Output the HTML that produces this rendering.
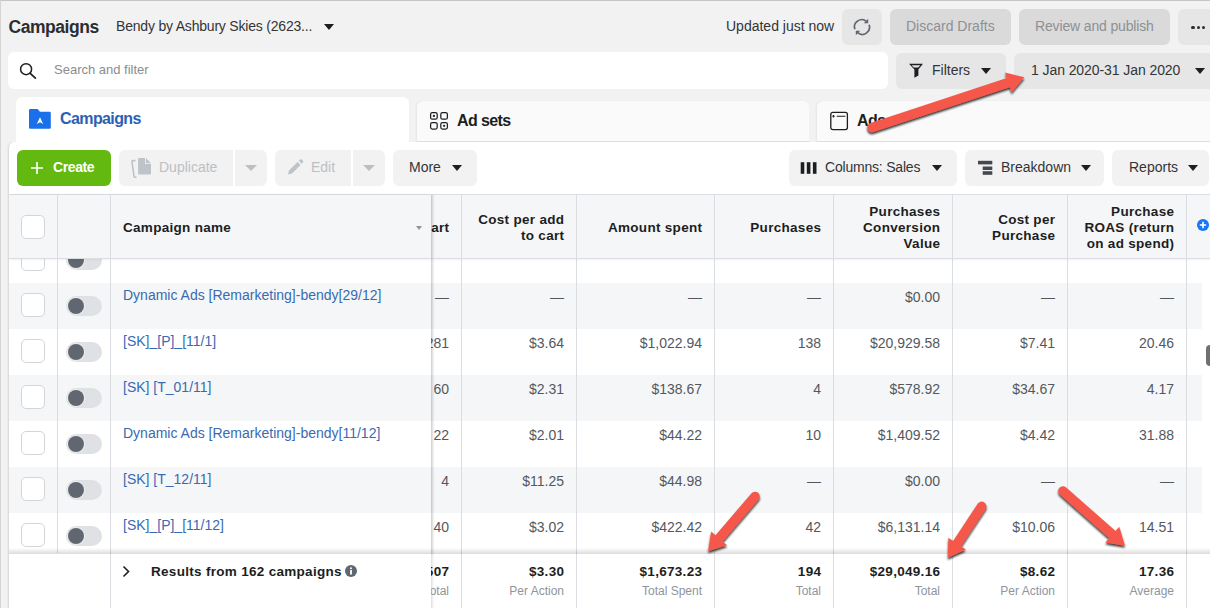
<!DOCTYPE html>
<html><head><meta charset="utf-8">
<style>
*{box-sizing:border-box;margin:0;padding:0}
html,body{width:1210px;height:608px;overflow:hidden}
body{position:relative;background:#f2f2f2;font-family:"Liberation Sans",sans-serif;color:#1c1e21;font-size:14px}
.a{position:absolute}
.t{position:absolute;white-space:nowrap;line-height:16px}
.r{position:absolute;white-space:nowrap;line-height:16px;text-align:right}
.btn{position:absolute;border-radius:6px}
.tri{position:absolute;width:0;height:0;border-left:5px solid transparent;border-right:5px solid transparent;border-top:6px solid #1c1e21}
.tris{position:absolute;width:0;height:0;border-left:6px solid transparent;border-right:6px solid transparent;border-top:6px solid #bcc0c4}
.cb{position:absolute;width:24px;height:24px;border:1px solid #d3d5d8;border-radius:5px;background:#fff}
.tg{position:absolute;width:36px;height:20px;border-radius:10px;background:#e0e1e4}
.kn{position:absolute;width:16px;height:16px;border-radius:8px;background:#606770;box-shadow:0 0 0 1px #eceef0}
.vl{position:absolute;width:1px;background:#dadde1}
.hd{position:absolute;white-space:nowrap;line-height:16px;text-align:right;font-weight:bold;color:#1c1e21;font-size:13.5px;letter-spacing:0.3px;margin-right:-0.3px}
.val{position:absolute;white-space:nowrap;line-height:16px;text-align:right;color:#54585e}
.nm{position:absolute;white-space:nowrap;line-height:16px;color:#3a6ab2}
.fb{position:absolute;white-space:nowrap;line-height:16px;text-align:right;font-weight:bold;color:#1c1e21;font-size:13.5px;letter-spacing:0.3px;margin-right:-0.3px}
.fs{position:absolute;white-space:nowrap;line-height:14px;text-align:right;font-size:12px;color:#90949c}
</style></head><body>
<div class="a" style="left:0;top:0;width:1210px;height:1px;background:#c4c6c9"></div>
<div class="a" style="left:0;top:0;width:1px;height:608px;background:#d4d4d4"></div>
<div class="t" style="left:8.5px;top:16.5px;font-size:17.5px;line-height:20px;font-weight:bold;color:#2b2e31;letter-spacing:-0.45px">Campaigns</div>
<div class="t" style="left:116px;top:18px;letter-spacing:-0.2px;color:#323538">Bendy by Ashbury Skies (2623...</div>
<div class="tri" style="left:324px;top:24px"></div>
<div class="t" style="left:726px;top:18px;color:#323538">Updated just now</div>
<div class="btn" style="left:842px;top:9px;width:40px;height:36px;background:#e6e6e6"></div>
<svg class="a" style="left:852px;top:17px" width="20" height="20" viewBox="0 0 20 20"><g fill="none" stroke="#606770" stroke-width="1.7"><path d="M2.9 12.2A7.2 7.2 0 0 1 14.6 4.6"/><path d="M17.1 7.8A7.2 7.2 0 0 1 5.6 15.6"/></g><path d="M16.2 1.8V6.2H11.8Z" fill="#606770"/><path d="M3.8 18.2V13.8H8.2Z" fill="#606770"/></svg>
<div class="btn" style="left:890px;top:9px;width:121px;height:36px;background:#dadada"></div>
<div class="t" style="left:906px;top:18px;color:#8d9094">Discard Drafts</div>
<div class="btn" style="left:1019px;top:9px;width:151px;height:36px;background:#dadada"></div>
<div class="t" style="left:1035px;top:18px;color:#8d9094;letter-spacing:-0.15px">Review and publish</div>
<div class="btn" style="left:1178px;top:9px;width:50px;height:36px;background:#e6e6e6"></div>
<div class="a" style="left:1191.4px;top:25.5px;width:3.2px;height:3.2px;border-radius:2px;background:#2b2e31"></div>
<div class="a" style="left:1196.6px;top:25.5px;width:3.2px;height:3.2px;border-radius:2px;background:#2b2e31"></div>
<div class="a" style="left:1201.6px;top:25.5px;width:3.2px;height:3.2px;border-radius:2px;background:#2b2e31"></div>
<div class="btn" style="left:8px;top:52px;width:880px;height:37px;background:#fff"></div>
<svg class="a" style="left:18px;top:61px" width="20" height="20" viewBox="0 0 20 20"><circle cx="8.1" cy="8.2" r="5.5" fill="none" stroke="#1c1e21" stroke-width="1.5"/><path d="M12.2 12.3L17.4 17.2" stroke="#1c1e21" stroke-width="1.7" stroke-linecap="round"/></svg>
<div class="t" style="left:54px;top:62px;font-size:13px;color:#8a8d91">Search and filter</div>
<div class="btn" style="left:896px;top:53px;width:110px;height:35.5px;background:#e6e6e6"></div>
<svg class="a" style="left:908px;top:62px" width="16" height="17" viewBox="0 0 16 17"><path d="M1 1.7H15L10.4 7.4V13.4L6.4 15.8V7.4Z" fill="#1c1e21"/><path d="M3.6 3.2H12.4L10.2 5.5H5.8Z" fill="#e6e6e6"/></svg>
<div class="t" style="left:932px;top:62px;color:#323538">Filters</div>
<div class="tri" style="left:981px;top:68px"></div>
<div class="btn" style="left:1014px;top:53px;width:210px;height:35.5px;background:#e6e6e6"></div>
<div class="t" style="left:1031px;top:62px;color:#323538;letter-spacing:-0.08px">1 Jan 2020-31 Jan 2020</div>
<div class="tri" style="left:1195px;top:68px"></div>
<div class="a" style="left:16px;top:97px;width:393px;height:50px;background:#fff;border-radius:6px 6px 0 0"></div>
<div class="a" style="left:417px;top:101px;width:392px;height:41px;background:#fafafa;border-radius:6px 6px 0 0;border-bottom:1px solid #e0e0e0;box-shadow:-1px 0 2px rgba(0,0,0,0.05)"></div>
<div class="a" style="left:817px;top:101px;width:400px;height:41px;background:#fafafa;border-radius:6px 6px 0 0;border-bottom:1px solid #e0e0e0;box-shadow:-1px 0 2px rgba(0,0,0,0.05)"></div>
<svg class="a" style="left:28px;top:108px" width="24" height="22" viewBox="0 0 24 22"><path d="M1 2.2Q1 1 2.2 1H9.6L12 3.8H21.6Q22.8 3.8 22.8 5V19.6Q22.8 20.8 21.6 20.8H2.2Q1 20.8 1 19.6Z" fill="#1a70ea"/><path d="M12 9.2L15.2 16L12 14.3L8.8 16Z" fill="#fff"/></svg>
<div class="t" style="left:60px;top:110px;font-size:16px;line-height:18px;font-weight:bold;color:#2d5fb5;letter-spacing:-0.6px">Campaigns</div>
<svg class="a" style="left:429px;top:111px" width="20" height="20" viewBox="0 0 20 20"><g fill="none" stroke="#1c1e21" stroke-width="1.25"><rect x="1.6" y="1.6" width="6.6" height="6.6" rx="1.8"/><rect x="11.8" y="1.6" width="6.6" height="6.6" rx="1.8"/><rect x="1.6" y="11.5" width="6.6" height="6.6" rx="1.8"/><rect x="11.8" y="11.5" width="6.6" height="6.6" rx="1.8"/></g><circle cx="4.9" cy="4.9" r="1.1" fill="#1c1e21"/><circle cx="15.1" cy="14.8" r="1.1" fill="#1c1e21"/></svg>
<div class="t" style="left:457px;top:112px;font-size:16px;line-height:18px;font-weight:bold;color:#1c1e21;letter-spacing:-0.6px">Ad sets</div>
<svg class="a" style="left:829px;top:111px" width="20" height="20" viewBox="0 0 20 20"><rect x="1.8" y="1.4" width="16.6" height="17.2" rx="2" fill="none" stroke="#1c1e21" stroke-width="1.3"/><path d="M7.8 5.3H16.4M3.3 5.3H5.7M4.5 4.1V6.5" stroke="#1c1e21" stroke-width="1.1"/></svg>
<div class="t" style="left:857px;top:112px;font-size:16px;line-height:18px;font-weight:bold;color:#1c1e21;letter-spacing:-0.6px">Ads</div>
<div class="a" style="left:8px;top:142px;width:1210px;height:470px;background:#fff;border-radius:6px 0 0 0;border-left:1px solid #dcdcdc;box-shadow:-1px 0 2px rgba(0,0,0,0.04)"></div>
<div class="btn" style="left:17px;top:150px;width:94px;height:36px;background:#63b90f"></div>
<svg class="a" style="left:31px;top:162px" width="12" height="12" viewBox="0 0 12 12"><path d="M6 0V12M0 6H12" stroke="#fff" stroke-width="1.6"/></svg>
<div class="t" style="left:53px;top:159px;font-weight:bold;color:#fff;letter-spacing:-0.4px">Create</div>
<div class="btn" style="left:119px;top:150px;width:114px;height:36px;background:#f2f2f2;border-radius:6px 0 0 6px"></div>
<div class="btn" style="left:235px;top:150px;width:32px;height:36px;background:#f2f2f2;border-radius:0 6px 6px 0"></div>
<svg class="a" style="left:130px;top:157px" width="22" height="21" viewBox="0 0 22 21"><path d="M9 0.9H15V6.9H21V16.6Q21 17.6 20 17.6H9Q8.1 17.6 8.1 16.6V1.9Q8.1 0.9 9 0.9Z" fill="#bec3c9"/><path d="M15.9 1.1L21 6.2H15.9Z" fill="#bec3c9"/><path d="M5.5 3.6H2.8Q1.8 3.6 2 4.6L4 19.5Q4.2 20.3 5 20.3H6.6" fill="none" stroke="#bec3c9" stroke-width="1.6"/></svg>
<div class="t" style="left:159px;top:159px;color:#bcc0c4">Duplicate</div>
<div class="tris" style="left:245px;top:165px"></div>
<div class="btn" style="left:275px;top:150px;width:76px;height:36px;background:#f2f2f2;border-radius:6px 0 0 6px"></div>
<div class="btn" style="left:353px;top:150px;width:32px;height:36px;background:#f2f2f2;border-radius:0 6px 6px 0"></div>
<svg class="a" style="left:286px;top:159px" width="18" height="17" viewBox="0 0 18 17"><path d="M2 15.6L3 11.6L11.6 3L14.6 6L6 14.6Z" fill="#bec3c9"/><path d="M12.8 1.8L14 0.6Q15 -0.2 16 0.8L16.8 1.6Q17.6 2.6 16.8 3.4L15.6 4.8Z" fill="#bec3c9"/></svg>
<div class="t" style="left:311px;top:159px;color:#bcc0c4">Edit</div>
<div class="tris" style="left:363px;top:165px"></div>
<div class="btn" style="left:393px;top:150px;width:84px;height:36px;background:#f2f2f2"></div>
<div class="t" style="left:409px;top:159px;color:#323538">More</div>
<div class="tri" style="left:452px;top:165px"></div>
<div class="btn" style="left:789px;top:150px;width:168px;height:36px;background:#f2f2f2"></div>
<svg class="a" style="left:800px;top:160px" width="17" height="16" viewBox="0 0 17 16"><rect x="0.7" y="2.2" width="3.6" height="11.6" fill="#1c1e21"/><rect x="6.8" y="2.2" width="3.6" height="11.6" fill="#1c1e21"/><rect x="12.9" y="2.2" width="3.6" height="11.6" fill="#1c1e21"/></svg>
<div class="t" style="left:825px;top:159px;color:#323538;letter-spacing:-0.2px">Columns: Sales</div>
<div class="tri" style="left:932px;top:165px"></div>
<div class="btn" style="left:965px;top:150px;width:139px;height:36px;background:#f2f2f2"></div>
<svg class="a" style="left:977px;top:160px" width="16" height="16" viewBox="0 0 16 16"><rect x="1" y="0.8" width="14.3" height="3.6" fill="#444950"/><rect x="5.7" y="6.5" width="9.6" height="3.5" fill="#444950"/><rect x="5.7" y="11.2" width="9.6" height="3.6" fill="#444950"/></svg>
<div class="t" style="left:1001px;top:159px;color:#323538">Breakdown</div>
<div class="tri" style="left:1081px;top:165px"></div>
<div class="btn" style="left:1112px;top:150px;width:97px;height:36px;background:#f2f2f2"></div>
<div class="t" style="left:1129px;top:159px;color:#323538">Reports</div>
<div class="tri" style="left:1188px;top:165px"></div>
<div class="a" style="left:9px;top:194px;width:1201px;height:65px;background:#f5f6f7;border-top:1px solid #dadde1;border-bottom:1px solid #dadde1"></div>
<div class="a" style="left:9px;top:283px;width:1193px;height:46px;background:#f5f6f7"></div>
<div class="a" style="left:9px;top:375px;width:1193px;height:46px;background:#f5f6f7"></div>
<div class="a" style="left:9px;top:467px;width:1193px;height:46px;background:#f5f6f7"></div>
<div class="vl" style="left:461px;top:195px;height:414px"></div>
<div class="vl" style="left:576px;top:195px;height:414px"></div>
<div class="vl" style="left:714px;top:195px;height:414px"></div>
<div class="vl" style="left:833px;top:195px;height:414px"></div>
<div class="vl" style="left:952px;top:195px;height:414px"></div>
<div class="vl" style="left:1067px;top:195px;height:414px"></div>
<div class="vl" style="left:1186px;top:195px;height:414px"></div>
<div class="val" style="right:761px;top:289px">—</div>
<div class="val" style="right:646px;top:289px">—</div>
<div class="val" style="right:508px;top:289px">—</div>
<div class="val" style="right:389px;top:289px">—</div>
<div class="val" style="right:270px;top:289px">$0.00</div>
<div class="val" style="right:155px;top:289px">—</div>
<div class="val" style="right:36px;top:289px">—</div>
<div class="val" style="right:761px;top:335px">281</div>
<div class="val" style="right:646px;top:335px">$3.64</div>
<div class="val" style="right:508px;top:335px">$1,022.94</div>
<div class="val" style="right:389px;top:335px">138</div>
<div class="val" style="right:270px;top:335px">$20,929.58</div>
<div class="val" style="right:155px;top:335px">$7.41</div>
<div class="val" style="right:36px;top:335px">20.46</div>
<div class="val" style="right:761px;top:381px">60</div>
<div class="val" style="right:646px;top:381px">$2.31</div>
<div class="val" style="right:508px;top:381px">$138.67</div>
<div class="val" style="right:389px;top:381px">4</div>
<div class="val" style="right:270px;top:381px">$578.92</div>
<div class="val" style="right:155px;top:381px">$34.67</div>
<div class="val" style="right:36px;top:381px">4.17</div>
<div class="val" style="right:761px;top:427px">22</div>
<div class="val" style="right:646px;top:427px">$2.01</div>
<div class="val" style="right:508px;top:427px">$44.22</div>
<div class="val" style="right:389px;top:427px">10</div>
<div class="val" style="right:270px;top:427px">$1,409.52</div>
<div class="val" style="right:155px;top:427px">$4.42</div>
<div class="val" style="right:36px;top:427px">31.88</div>
<div class="val" style="right:761px;top:473px">4</div>
<div class="val" style="right:646px;top:473px">$11.25</div>
<div class="val" style="right:508px;top:473px">$44.98</div>
<div class="val" style="right:389px;top:473px">—</div>
<div class="val" style="right:270px;top:473px">$0.00</div>
<div class="val" style="right:155px;top:473px">—</div>
<div class="val" style="right:36px;top:473px">—</div>
<div class="val" style="right:761px;top:519px">40</div>
<div class="val" style="right:646px;top:519px">$3.02</div>
<div class="val" style="right:508px;top:519px">$422.42</div>
<div class="val" style="right:389px;top:519px">42</div>
<div class="val" style="right:270px;top:519px">$6,131.14</div>
<div class="val" style="right:155px;top:519px">$10.06</div>
<div class="val" style="right:36px;top:519px">14.51</div>
<div class="hd" style="right:646px;top:212px">Cost per add<br>to cart</div>
<div class="hd" style="right:508px;top:220px">Amount spent</div>
<div class="hd" style="right:389px;top:220px">Purchases</div>
<div class="hd" style="right:270px;top:204px">Purchases<br>Conversion<br>Value</div>
<div class="hd" style="right:155px;top:212px">Cost per<br>Purchase</div>
<div class="hd" style="right:36px;top:204px">Purchase<br>ROAS (return<br>on ad spend)</div>
<div class="hd" style="right:761px;top:220px">Adds to cart</div>
<svg class="a" style="left:1197px;top:219px" width="12" height="12" viewBox="0 0 12 12"><circle cx="6" cy="6" r="6" fill="#1877f2"/><path d="M6 2.8V9.2M2.8 6H9.2" stroke="#fff" stroke-width="1.6"/></svg>
<div class="a" style="left:9px;top:195px;width:422px;height:413px;background:transparent;box-shadow:2px 0 2px rgba(0,0,0,0.08)"></div>
<div class="a" style="left:9px;top:195px;width:422px;height:63px;background:#f5f6f7"></div>
<div class="a" style="left:9px;top:258px;width:422px;height:25px;background:#fff"></div>
<div class="cb" style="left:21px;top:247px"></div>
<div class="tg" style="left:66px;top:250px"></div>
<div class="kn" style="left:68px;top:252px"></div>
<div class="a" style="left:9px;top:283px;width:422px;height:46px;background:#f5f6f7"></div>
<div class="cb" style="left:21px;top:293px"></div>
<div class="tg" style="left:66px;top:296px"></div>
<div class="kn" style="left:68px;top:298px"></div>
<div class="nm" style="left:123px;top:287px">Dynamic Ads [Remarketing]-bendy[29/12]</div>
<div class="a" style="left:9px;top:329px;width:422px;height:46px;background:#fff"></div>
<div class="cb" style="left:21px;top:339px"></div>
<div class="tg" style="left:66px;top:342px"></div>
<div class="kn" style="left:68px;top:344px"></div>
<div class="nm" style="left:123px;top:333px">[SK]_[P]_[11/1]</div>
<div class="a" style="left:9px;top:375px;width:422px;height:46px;background:#f5f6f7"></div>
<div class="cb" style="left:21px;top:385px"></div>
<div class="tg" style="left:66px;top:388px"></div>
<div class="kn" style="left:68px;top:390px"></div>
<div class="nm" style="left:123px;top:379px">[SK] [T_01/11]</div>
<div class="a" style="left:9px;top:421px;width:422px;height:46px;background:#fff"></div>
<div class="cb" style="left:21px;top:431px"></div>
<div class="tg" style="left:66px;top:434px"></div>
<div class="kn" style="left:68px;top:436px"></div>
<div class="nm" style="left:123px;top:425px">Dynamic Ads [Remarketing]-bendy[11/12]</div>
<div class="a" style="left:9px;top:467px;width:422px;height:46px;background:#f5f6f7"></div>
<div class="cb" style="left:21px;top:477px"></div>
<div class="tg" style="left:66px;top:480px"></div>
<div class="kn" style="left:68px;top:482px"></div>
<div class="nm" style="left:123px;top:471px">[SK] [T_12/11]</div>
<div class="a" style="left:9px;top:513px;width:422px;height:46px;background:#fff"></div>
<div class="cb" style="left:21px;top:523px"></div>
<div class="tg" style="left:66px;top:526px"></div>
<div class="kn" style="left:68px;top:528px"></div>
<div class="nm" style="left:123px;top:517px">[SK]_[P]_[11/12]</div>
<div class="a" style="left:9px;top:195px;width:422px;height:63px;background:#f5f6f7"></div>
<div class="a" style="left:9px;top:258px;width:1201px;height:1px;background:#dadde1;box-shadow:0 1px 2px rgba(0,0,0,0.08)"></div>
<div class="cb" style="left:21px;top:215px"></div>
<div class="hd" style="left:123px;top:220px;text-align:left">Campaign name</div>
<div class="a" style="left:416px;top:226px;width:0;height:0;border-left:3.5px solid transparent;border-right:3.5px solid transparent;border-top:4px solid #8d949e"></div>
<div class="vl" style="left:57px;top:195px;height:358px"></div>
<div class="vl" style="left:110px;top:195px;height:414px"></div>
<div class="a" style="left:431px;top:195px;width:4px;height:414px;background:linear-gradient(90deg,rgba(0,0,0,0.13),rgba(0,0,0,0.04) 50%,rgba(0,0,0,0))"></div>
<div class="a" style="left:9px;top:548px;width:1201px;height:6px;background:linear-gradient(rgba(0,0,0,0),rgba(0,0,0,0.14))"></div>
<div class="a" style="left:9px;top:554px;width:1201px;height:54px;background:#fff"></div>
<div class="vl" style="left:110px;top:554px;height:54px"></div>
<div class="vl" style="left:461px;top:554px;height:54px"></div>
<div class="vl" style="left:576px;top:554px;height:54px"></div>
<div class="vl" style="left:714px;top:554px;height:54px"></div>
<div class="vl" style="left:833px;top:554px;height:54px"></div>
<div class="vl" style="left:952px;top:554px;height:54px"></div>
<div class="vl" style="left:1067px;top:554px;height:54px"></div>
<div class="vl" style="left:1186px;top:554px;height:54px"></div>
<div class="a" style="left:431px;top:554px;width:4px;height:54px;background:linear-gradient(90deg,rgba(0,0,0,0.13),rgba(0,0,0,0.04) 50%,rgba(0,0,0,0))"></div>
<svg class="a" style="left:121px;top:565px" width="10" height="13" viewBox="0 0 10 13"><path d="M2.5 1.5L7.5 6.5L2.5 11.5" fill="none" stroke="#1c1e21" stroke-width="1.6"/></svg>
<div class="fb" style="left:151px;top:564px;text-align:left">Results from 162 campaigns</div>
<svg class="a" style="left:345px;top:565px" width="12" height="12" viewBox="0 0 12 12"><circle cx="6" cy="6" r="6" fill="#606770"/><rect x="5.1" y="5" width="1.8" height="4.5" fill="#fff"/><circle cx="6" cy="3.2" r="1" fill="#fff"/></svg>
<div class="fb" style="right:761px;top:564px">1,507</div>
<div class="fs" style="right:761px;top:584px">Total</div>
<div class="fb" style="right:646px;top:564px">$3.30</div>
<div class="fs" style="right:646px;top:584px">Per Action</div>
<div class="fb" style="right:508px;top:564px">$1,673.23</div>
<div class="fs" style="right:508px;top:584px">Total Spent</div>
<div class="fb" style="right:389px;top:564px">194</div>
<div class="fs" style="right:389px;top:584px">Total</div>
<div class="fb" style="right:270px;top:564px">$29,049.16</div>
<div class="fs" style="right:270px;top:584px">Total</div>
<div class="fb" style="right:155px;top:564px">$8.62</div>
<div class="fs" style="right:155px;top:584px">Per Action</div>
<div class="fb" style="right:36px;top:564px">17.36</div>
<div class="fs" style="right:36px;top:584px">Average</div>
<div class="a" style="left:111px;top:554px;width:320px;height:54px;background:#fff"></div>
<svg class="a" style="left:121px;top:565px" width="10" height="13" viewBox="0 0 10 13"><path d="M2.5 1.5L7.5 6.5L2.5 11.5" fill="none" stroke="#1c1e21" stroke-width="1.6"/></svg>
<div class="fb" style="left:151px;top:564px;text-align:left">Results from 162 campaigns</div>
<svg class="a" style="left:345px;top:565px" width="12" height="12" viewBox="0 0 12 12"><circle cx="6" cy="6" r="6" fill="#606770"/><rect x="5.1" y="5" width="1.8" height="4.5" fill="#fff"/><circle cx="6" cy="3.2" r="1" fill="#fff"/></svg>
<div class="a" style="left:1206px;top:345px;width:8px;height:21px;border-radius:4px;background:#707070"></div>
<svg class="a" style="left:0;top:0" width="1210" height="608" viewBox="0 0 1210 608"><defs><filter id="sh" x="-20%" y="-20%" width="140%" height="140%"><feGaussianBlur in="SourceAlpha" stdDeviation="1.1"/><feOffset dx="0.4" dy="1.8"/><feComponentTransfer><feFuncA type="linear" slope="0.8"/></feComponentTransfer><feMerge><feMergeNode/><feMergeNode in="SourceGraphic"/></feMerge></filter></defs><g filter="url(#sh)"><path d="M872.0 127.5 L1012.1 81.4" stroke="#f5594b" stroke-width="9.6" stroke-linecap="round" fill="none"/><polygon points="1024.4,77.3 1011.5,92.6 1005.0,72.6" fill="#f5594b"/><path d="M755.0 496.5 L716.6 541.4" stroke="#f5594b" stroke-width="9.6" stroke-linecap="round" fill="none"/><polygon points="708.1,551.3 711.2,531.6 727.1,545.2" fill="#f5594b"/><path d="M981.7 506.4 L955.0 546.9" stroke="#f5594b" stroke-width="9.6" stroke-linecap="round" fill="none"/><polygon points="947.8,557.8 948.4,537.8 965.9,549.4" fill="#f5594b"/><path d="M1063.0 491.0 L1115.3 537.2" stroke="#f5594b" stroke-width="9.6" stroke-linecap="round" fill="none"/><polygon points="1125.0,545.8 1105.3,542.4 1119.2,526.7" fill="#f5594b"/></g></svg>
</body></html>
